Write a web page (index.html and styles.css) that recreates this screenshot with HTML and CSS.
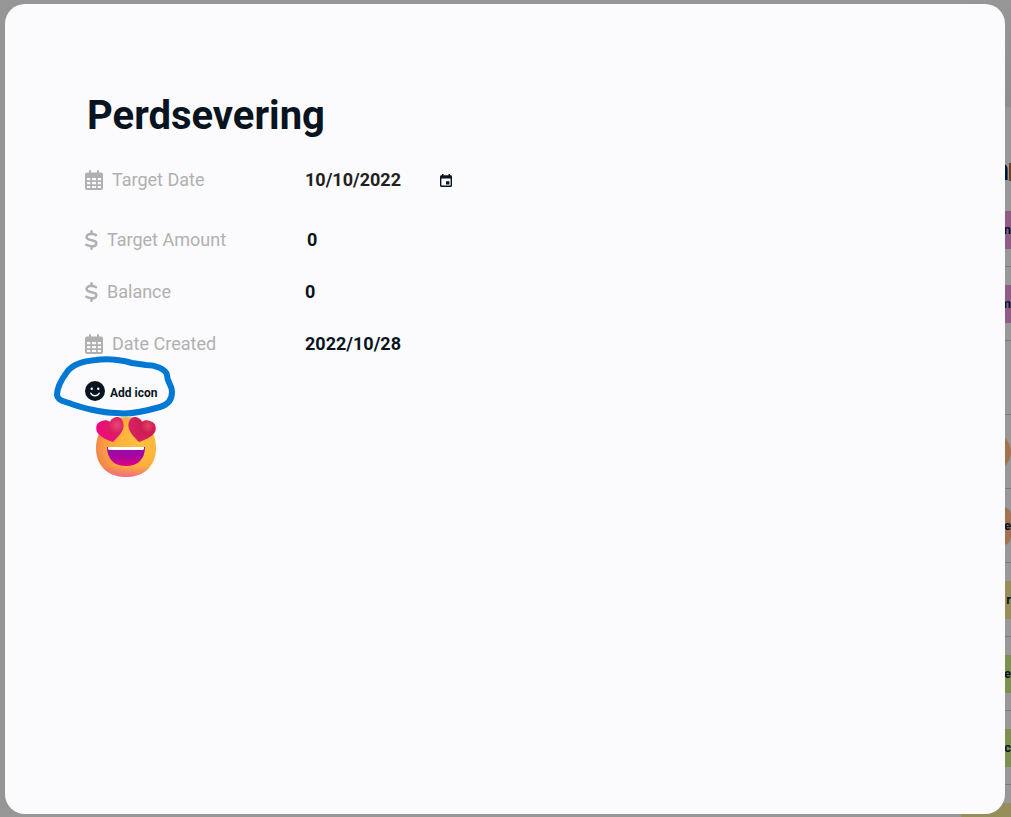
FILE: index.html
```html
<!DOCTYPE html>
<html lang="en">
<head>
<meta charset="utf-8">
<title>Perdsevering</title>
<link rel="stylesheet" href="styles.css">
</head>
<body>
<svg class="defs" aria-hidden="true">
  <symbol id="calendar" viewBox="0 0 18 20">
    <path fill-rule="evenodd" d="M4 1a1 1 0 0 1 2 0v1.500h6V1a1 1 0 0 1 2 0v1.500h2a2 2 0 0 1 2 2V18a2 2 0 0 1-2 2H2a2 2 0 0 1-2-2V4.500a2 2 0 0 1 2-2h2zM2 8v2.300h3.300V8zm5 0v2.300h4V8zm5.700 0v2.300H16V8zM2 12v2.300h3.300V12zm5 0v2.300h4V12zm5.700 0v2.300H16V12zM2 16v2h3.300v-2zm5 0v2h4v-2zm5.700 0v2H16v-2z"/>
  </symbol>
  <symbol id="dollar" viewBox="0 0 13 20">
    <path fill="none" stroke="currentColor" stroke-width="2.500" stroke-linecap="round" d="M6.500 1.300v2.600M6.500 16.400v2.400M11 5.200C8.800 4.100 6.500 3.600 4.600 4C2.100 4.500 1.300 6.400 1.800 7.800C2.400 9.400 4.600 9.700 6.500 10.100C9 10.600 11.600 11 11.400 13.400C11.200 15.800 8.800 16.500 6.500 16.300C4.500 16.200 3 15.500 1.400 14.800"/>
  </symbol>
</svg>

<div class="board" aria-hidden="true">
  <div class="board-top"></div>
  <div class="board-title">n<span class="edge"></span></div>
  <div class="board-row"><span class="pill pink">n</span></div>
  <div class="board-row"><span class="pill pink">m</span></div>
  <div class="board-row"></div>
  <div class="board-row"><span class="pill orange round"></span></div>
  <div class="board-row"><span class="pill orange late">e</span></div>
  <div class="board-row"><span class="pill olive">r</span></div>
  <div class="board-row"><span class="pill green">e</span></div>
  <div class="board-row"><span class="pill green">c</span></div>
  <div class="board-row"><span class="pill olive"></span></div>
</div>

<main class="modal">
  <h1 class="title">Perdsevering</h1>
  <div class="field date-field">
    <label class="label" for="target-date"><svg class="cal"><use href="#calendar"/></svg>Target Date</label>
    <span class="date-box">
      <input class="date" id="target-date" type="date" value="2022-10-10">
      <svg class="picker" viewBox="0 0 12 13" aria-hidden="true"><path fill="#0a1420" fill-rule="evenodd" d="M2 0h1.500v1.300h5V0H10v1.300h.6Q12 1.300 12 2.700V11.500Q12 13 10.600 13H1.400Q0 13 0 11.500V2.700Q0 1.300 1.400 1.300H2zM1.400 4.600v7h9.200v-7zM6 7.200h3.400v3.200H6z"/></svg>
    </span>
  </div>
  <div class="field">
    <label class="label" for="amount"><svg class="dollar"><use href="#dollar"/></svg>Target Amount</label>
    <input class="amount" id="amount" type="text" value="0">
  </div>
  <div class="field">
    <span class="label"><svg class="dollar"><use href="#dollar"/></svg>Balance</span>
    <span class="value">0</span>
  </div>
  <div class="field">
    <span class="label"><svg class="cal"><use href="#calendar"/></svg>Date Created</span>
    <span class="value">2022/10/28</span>
  </div>
  <div class="icon-area">
    <button class="add-icon" type="button">
      <svg class="smile" viewBox="0 0 20 20"><circle cx="10" cy="10" r="10" fill="#0a1420"/><circle cx="6.700" cy="7.700" r="1.200" fill="#fbfbfe"/><circle cx="13.300" cy="7.700" r="1.200" fill="#fbfbfe"/><path d="M5.800 12.200C7.500 15.500 12.500 15.500 14.200 12.200" fill="none" stroke="#fbfbfe" stroke-width="1.400" stroke-linecap="round"/></svg><span class="add-text">Add icon</span>
    </button>
    <svg class="emoji" viewBox="0 0 60 60" role="img" aria-label="Heart eyes">
      <defs>
        <radialGradient id="face" cx=".75" cy=".4" r=".85"><stop offset="0" stop-color="#ffc23d"/><stop offset=".6" stop-color="#fcab3c"/><stop offset="1" stop-color="#ee7a4e"/></radialGradient>
        <linearGradient id="chin" x1="0" y1="0" x2="0" y2="1"><stop offset=".82" stop-color="#ee5c87" stop-opacity="0"/><stop offset="1" stop-color="#ee659d" stop-opacity=".8"/></linearGradient>
        <linearGradient id="mouth" x1="0" y1="0" x2="0" y2="1"><stop offset="0" stop-color="#8b0caa"/><stop offset=".5" stop-color="#a9059f"/><stop offset="1" stop-color="#e30083"/></linearGradient>
        <radialGradient id="heart-left" gradientUnits="userSpaceOnUse" cx="21" cy="8" r="18"><stop offset="0" stop-color="#e84a70"/><stop offset=".45" stop-color="#dc1c64"/><stop offset="1" stop-color="#f0087e"/></radialGradient>
        <radialGradient id="heart-right" gradientUnits="userSpaceOnUse" cx="52" cy="9" r="20"><stop offset="0" stop-color="#e04768"/><stop offset=".35" stop-color="#cf1b54"/><stop offset="1" stop-color="#d92362"/></radialGradient>
      </defs>
      <path fill="url(#face)" d="M30 0C48 0 60 13 60 31C60 49 48 60 30 60S0 49 0 31C0 13 12 0 30 0Z"/>
      <path fill="url(#chin)" d="M30 0C48 0 60 13 60 31C60 49 48 60 30 60S0 49 0 31C0 13 12 0 30 0Z"/>
      <path fill="url(#mouth)" d="M11 30H49C49 42 42 49 30 49S11 42 11 30Z"/>
      <path fill="#fff" d="M12 30H48V31.500Q48 33 46 33H14Q12 33 12 31.500Z"/>
      <path fill="url(#heart-left)" d="M14 5C15 2 18 0 22 0C26 1 28 5 27.500 10C26.500 16 21 21 17 25C11 23 4 20 1 15C-1 10 1 5 6 4C9 3 12 3 14 5Z"/>
      <path fill="url(#heart-right)" d="M46 5C45 2 42 0 38 0C34 1 32 5 32.500 10C33.500 16 39 21 43 25C49 23 56 20 59 15C61 10 59 5 54 4C51 3 48 3 46 5Z"/>
    </svg>
    <svg class="scribble" viewBox="0 0 122 62" aria-hidden="true"><path d="M13 17C18 10 30 6 42 5C57 3 67 5 78 8L92 10C101 10 112 14 113 20C113 28 118 29 118 37C118 46 113 50 106 52C92 56 76 60 63 58C47 58 25 52 15 48C8 46 4 45 3 40C3 32 7 25 13 17Z"/></svg>
  </div>
</main>
</body>
</html>
```
FILE: styles.css
```css
* { box-sizing: border-box; }
body {
  margin: 0;
  min-height: 100vh;
  display: flex;
  padding: 4px 6px 3px 5px;
  background: #969696;
  color: #0a1420;
  font-family: Roboto, sans-serif;
  overflow: hidden;
}
.defs { position: absolute; width: 0; height: 0; }

.board {
  position: absolute;
  top: 0;
  right: 0;
  bottom: 0;
  width: 50px;
  overflow: hidden;
  background: #989898;
  font-weight: 700;
  font-size: 13px;
}
.board-top { height: 107px; background: linear-gradient(#969696, #8e8e8e); }
.board-title {
  height: 86px;
  padding-top: 47px;
  display: flex;
  justify-content: flex-end;
  font-size: 30px;
  line-height: 32px;
}
.edge { width: 2px; height: 18px; margin-top: 9px; background: #6e4020; }
.board-row {
  height: 74px;
  display: flex;
  align-items: center;
  border-bottom: 1px solid #7c7c7c;
}
.pill {
  flex: 1;
  height: 38px;
  display: flex;
  align-items: center;
  justify-content: flex-end;
}
.pink { background: #8f5c88; }
.orange { background: #a17353; }
.olive { background: #968f5b; }
.green { background: #7a9150; }
.round { border-radius: 0 19px 19px 0; }
.late { border-radius: 0 8px 8px 0; }

.modal {
  position: relative;
  flex: 1;
  padding: 85px 80px;
  border-radius: 20px;
  background: #fbfbfe;
}
.title {
  margin: 0 0 25px;
  padding-left: 2px;
  font-size: 40px;
  line-height: 54px;
  font-weight: 700;
}
.field {
  display: grid;
  grid-template-columns: 220px 1fr;
  align-items: center;
  height: 24px;
  margin-bottom: 28px;
  font-size: 18px;
  line-height: 24px;
}
.date-field { margin-bottom: 36px; }
.label { display: flex; align-items: center; color: #b0b0b0; }
.cal { width: 18px; height: 20px; margin-right: 9px; fill: #b0b0b0; }
.dollar { width: 13px; height: 20px; margin-right: 9px; }
.value { font-weight: 700; }
.date, .amount {
  width: 150px;
  border: 0;
  padding: 0;
  background: transparent;
  color: inherit;
  font: inherit;
  font-weight: 700;
}
.amount { padding-left: 2px; }
.date-box { position: relative; display: flex; width: 150px; }
.date { color: #212121; }
.date::-webkit-calendar-picker-indicator { opacity: 0; }
.date::-webkit-datetime-edit-fields-wrapper { padding: 0; }
.date::-webkit-datetime-edit-month-field,
.date::-webkit-datetime-edit-day-field,
.date::-webkit-datetime-edit-year-field { padding: 0; }
.picker {
  position: absolute;
  right: 3px;
  top: 6px;
  width: 12px;
  height: 13px;
  pointer-events: none;
}

.icon-area { position: relative; margin-top: -5px; }
.add-icon {
  display: flex;
  align-items: center;
  gap: 5px;
  height: 24px;
  border: 0;
  padding: 0;
  background: transparent;
  color: inherit;
  font: 700 12px/24px Roboto, sans-serif;
}
.add-text { padding-top: 4px; }
.smile { width: 20px; height: 20px; }
.scribble {
  position: absolute;
  left: -31px;
  top: -24px;
  width: 122px;
  height: 62px;
  fill: none;
  stroke: #0078d4;
  stroke-width: 6px;
  stroke-linejoin: round;
  pointer-events: none;
}
.emoji { display: block; width: 60px; height: 60px; margin: 14px 0 0 11px; }
```
